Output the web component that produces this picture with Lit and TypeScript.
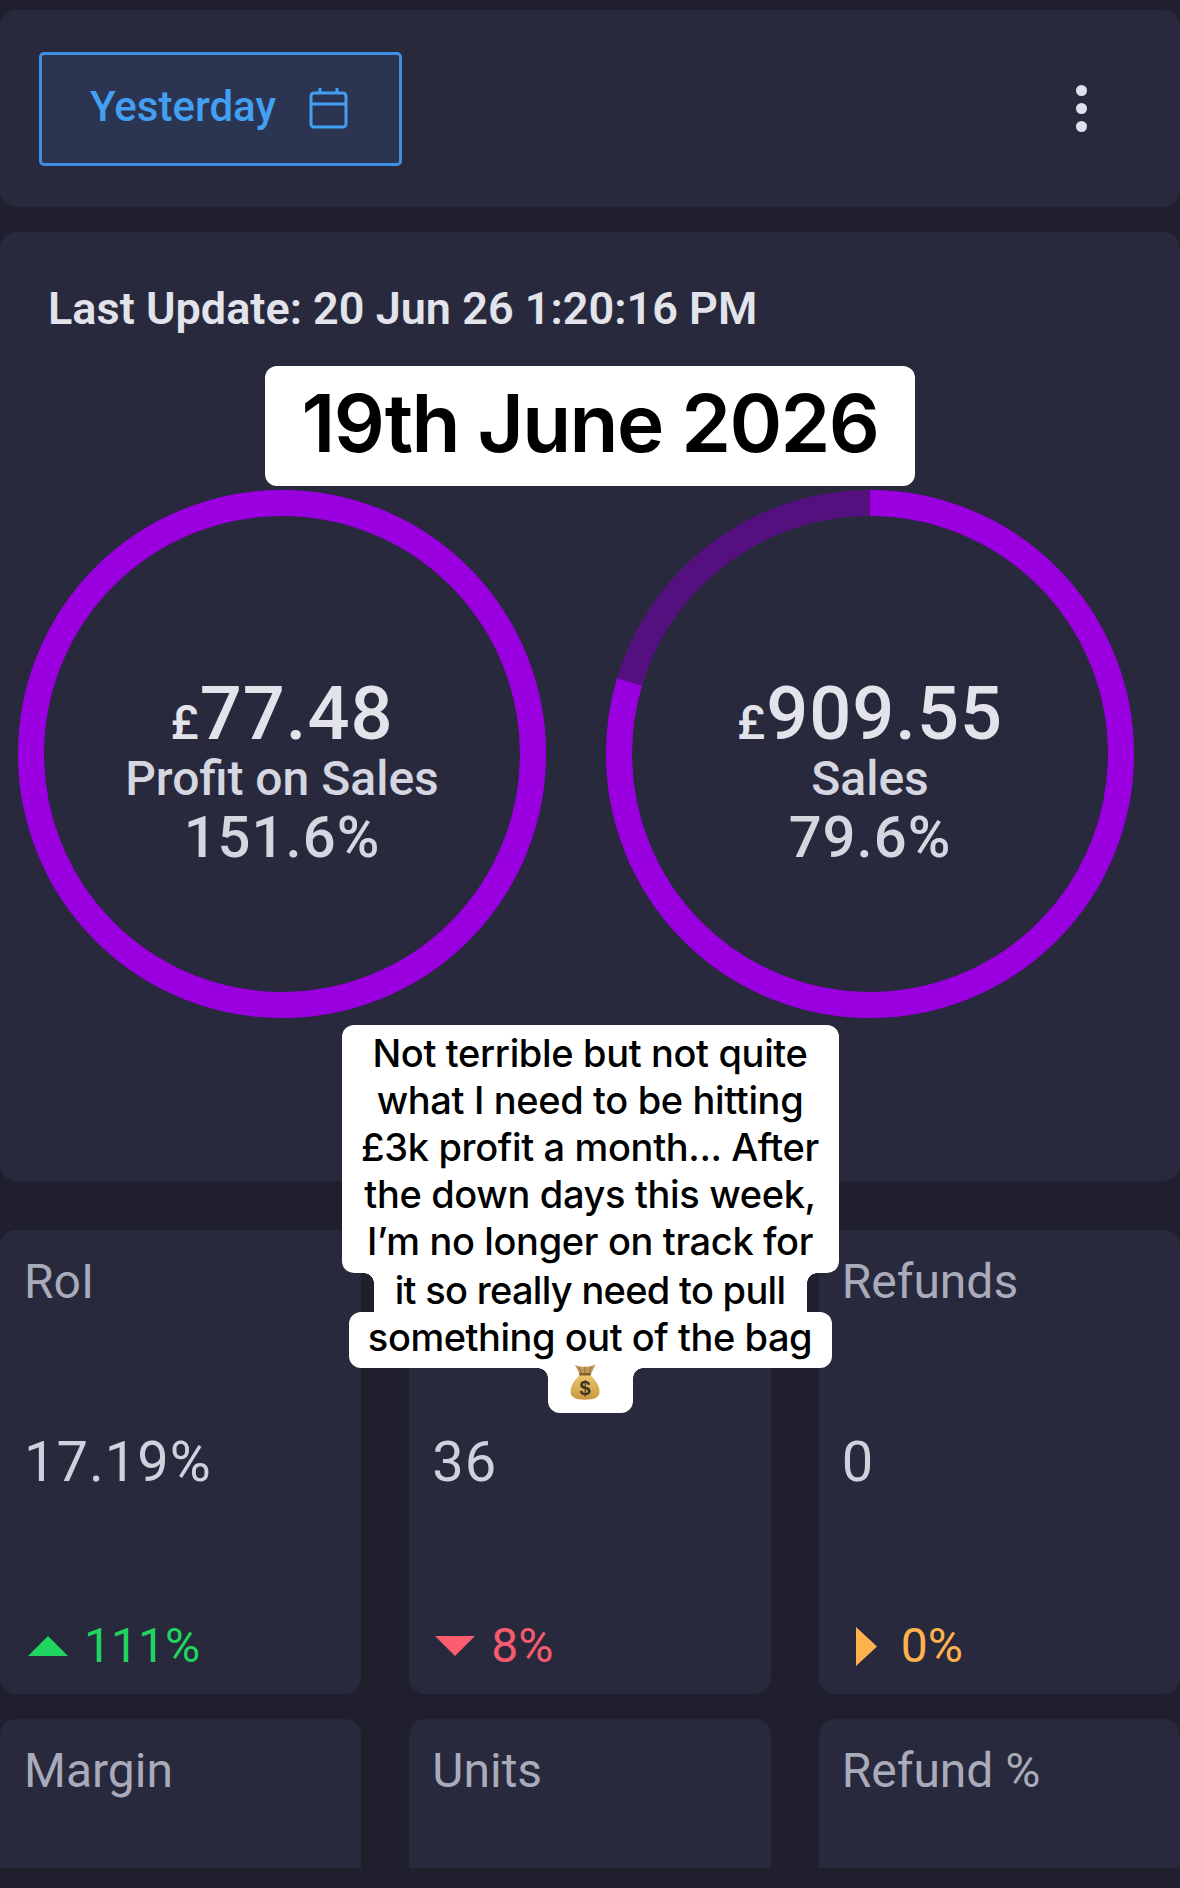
import { LitElement, html, css, svg } from "lit";
import { customElement } from "lit/decorators.js";

const R = 251;
const C = 2 * Math.PI * R;

function ring(pct: number) {
  const bright = (C * pct) / 100;
  return html`<svg class="ring" viewBox="0 0 528 528" width="528" height="528">
    <circle cx="264" cy="264" r="${R}" fill="none" stroke="#55107f" stroke-width="26"></circle>
    <circle cx="264" cy="264" r="${R}" fill="none" stroke="#9a00df" stroke-width="26"
      stroke-dasharray="${bright} ${C}" transform="rotate(-90 264 264)"></circle>
  </svg>`;
}

const bag = svg`<svg class="bag" viewBox="0 0 30 36" width="30" height="36">
  <defs>
    <linearGradient id="bagFill" x1="0" y1="0" x2="0" y2="1">
      <stop offset="0" stop-color="#e8c66c"></stop>
      <stop offset="1" stop-color="#c9993f"></stop>
    </linearGradient>
  </defs>
  <path d="M5 1 C9 2.500 12 3 15 2.500 C18 3 22 2 25.500 0.500 L21 10 H9.500 Z" fill="#c49a5c"></path>
  <path d="M9 3 L12 10 M15 3 V10 M21 3 L18.500 10" stroke="#8f6a36" stroke-width="1" fill="none"></path>
  <path d="M10 11 C4 16 0.500 22 0.500 28 C0.500 33.500 6 35.700 15 35.700 C24 35.700 29.500 33.500 29.500 28 C29.500 22 26 16 20 11 Z" fill="url(#bagFill)"></path>
  <rect x="9" y="9" width="12" height="2.500" rx="1.200" fill="#86602a"></rect>
  <text x="15" y="30.500" font-family="Liberation Sans, sans-serif" font-size="20" font-weight="700" fill="#3e3126" text-anchor="middle">$</text>
</svg>`;

@customElement("app-root")
export class AppRoot extends LitElement {
  static styles = css`
    :host {
      display: block;
      position: relative;
      width: 1180px;
      height: 1888px;
      overflow: hidden;
      background: #1f1f2d;
      font-family: Roboto, "Noto Sans", sans-serif;
      color: #e2e3eb;
    }
    .page { display: flex; flex-direction: column; padding-top: 10px; }
    .card { background: #28293d; border-radius: 16px; }
    .top {
      height: 197px;
      display: flex;
      align-items: center;
      justify-content: space-between;
      padding: 0 93px 0 39px;
      box-sizing: border-box;
    }
    .btn {
      box-sizing: border-box;
      width: 363px;
      height: 114px;
      border: 3px solid #3f8fe4;
      border-radius: 5px;
      background: #2b3552;
      color: #429ff2;
      display: flex;
      align-items: center;
      gap: 33px;
      padding: 0 0 4px 48px;
      font-size: 42px;
      font-weight: 500;
    }
    .cal { margin-top: 3px; }
    .dots { display: flex; flex-direction: column; gap: 7px; }
    .dots i { width: 11px; height: 11px; border-radius: 50%; background: #dfe1ea; }
    .main {
      margin-top: 25px;
      height: 949px;
      box-sizing: border-box;
      padding: 52px 0 0 48px;
    }
    .update { font-size: 45px; font-weight: 600; line-height: 48px; margin-top: 1px; margin-bottom: -1px; }
    .rings {
      display: flex;
      gap: 60px;
      margin: 158px 0 0 -30px;
    }
    .gauge { display: grid; width: 528px; height: 528px; }
    .gauge > * { grid-area: 1 / 1; }
    .gauge-text {
      display: flex;
      flex-direction: column;
      align-items: center;
      justify-content: center;
      padding-top: 46px;
    }
    .amount { font-size: 74px; font-weight: 500; line-height: 68px; letter-spacing: 1px; }
    .amount small { font-size: 48px; font-weight: 500; }
    .gauge-label { font-size: 48px; line-height: 43px; font-weight: 500; color: #d5d6e0; }
    .pct { font-size: 58px; font-weight: 500; line-height: 74px; letter-spacing: 1px; color: #d5d6e0; }
    .grid {
      margin-top: 49px;
      display: grid;
      grid-template-columns: repeat(3, 1fr);
      column-gap: 48px;
      row-gap: 25px;
    }
    .stat {
      height: 464px;
      box-sizing: border-box;
      padding: 24px 24px 0 24px;
      display: flex;
      flex-direction: column;
    }
    .stat:not(:nth-child(3n + 1)) { padding-left: 23px; }
    .stat.cut { height: 149px; border-radius: 16px 16px 0 0; }
    .label { font-size: 48px; line-height: 56px; color: #a9abba; min-height: 56px; }
    .value { margin-top: 119px; font-size: 56px; line-height: 66px; color: #cfd1dc; letter-spacing: 1px; }
    .delta {
      margin-top: 123px;
      display: flex;
      align-items: center;
      font-size: 48px;
      line-height: 56px;
    }
    .up { color: #1fd45f; gap: 16px; }
    .down { color: #f45b6d; gap: 16px; }
    .flat { color: #ffb14e; gap: 24px; }
    .tri { display: block; }
    .up .tri { margin-left: 4px; }
    .down .tri { margin-left: 3px; }
    .flat .tri { margin-left: 14px; }

    .cap {
      position: absolute;
      left: 0;
      right: 0;
      display: flex;
      flex-direction: column;
      align-items: center;
      font-family: Inter, "Noto Sans", sans-serif;
      color: #000;
      text-align: center;
    }
    .date-cap { top: 366px; }
    .date-cap div {
      background: #fff;
      border-radius: 12px;
      width: 650px;
      height: 120px;
      line-height: 114px;
      font-size: 80px;
      font-weight: 600;
      letter-spacing: -1.6px;
    }
    .note { top: 1025px; font-size: 38px; font-weight: 500; line-height: 47px; letter-spacing: -0.35px; }
    .block {
      background: #fff;
      border-radius: 12px;
      width: 497px;
      height: 248px;
      padding-top: 5px;
      box-sizing: border-box;
      white-space: nowrap;
    }
    .line { background: #fff; white-space: nowrap; position: relative; box-sizing: border-box; }
    .l6 { width: 433px; height: 39px; line-height: 35px; letter-spacing: -0.7px; }
    .l7 { width: 483px; height: 56px; border-radius: 12px; line-height: 50px; letter-spacing: -0.45px; }
    .l8 { width: 85px; height: 45px; border-radius: 0 0 12px 12px; display: flex; justify-content: center; padding-right: 10px; }
    .bag { display: block; margin-top: -4px; }
    .l6::before, .l8::before {
      content: "";
      position: absolute;
      top: 0;
      width: 10px;
      height: 10px;
      left: -10px;
      background: radial-gradient(circle at 0 100%, transparent 9.5px, #fff 10px);
    }
    .l6::after, .l8::after {
      content: "";
      position: absolute;
      top: 0;
      width: 10px;
      height: 10px;
      right: -10px;
      background: radial-gradient(circle at 100% 100%, transparent 9.5px, #fff 10px);
    }
  `;

  private stat(label: string, value: string, delta: string, kind: "up" | "down" | "flat") {
    const icon =
      kind === "up"
        ? html`<svg class="tri" width="40" height="20" viewBox="0 0 40 20"><path d="M20 0 L40 20 H0 Z" fill="#1fd45f"></path></svg>`
        : kind === "down"
          ? html`<svg class="tri" width="40" height="20" viewBox="0 0 40 20"><path d="M0 0 H40 L20 20 Z" fill="#fb5d6f"></path></svg>`
          : html`<svg class="tri" width="21" height="39" viewBox="0 0 21 39"><path d="M0 0 L21 19.5 L0 39 Z" fill="#ffb14e"></path></svg>`;
    return html`<div class="card stat">
      <div class="label">${label}</div>
      <div class="value">${value}</div>
      <div class="delta ${kind}">${icon}<span>${delta}</span></div>
    </div>`;
  }

  render() {
    return html`
      <div class="page">
        <div class="card top">
          <div class="btn">
            <span>Yesterday</span>
            <svg class="cal" width="39" height="42" viewBox="0 0 39 42" fill="none" stroke="#429ff2" stroke-width="3">
              <rect x="2" y="6" width="35" height="34" rx="3"></rect>
              <path d="M2 17 H37 M11 1 V6 M28 1 V6"></path>
            </svg>
          </div>
          <div class="dots"><i></i><i></i><i></i></div>
        </div>
        <div class="card main">
          <div class="update">Last Update: 20 Jun 26 1:20:16 PM</div>
          <div class="rings">
            <div class="gauge">
              ${ring(100)}
              <div class="gauge-text">
                <div class="amount"><small>£</small>77.48</div>
                <div class="gauge-label">Profit on Sales</div>
                <div class="pct">151.6%</div>
              </div>
            </div>
            <div class="gauge">
              ${ring(79.6)}
              <div class="gauge-text">
                <div class="amount"><small>£</small>909.55</div>
                <div class="gauge-label">Sales</div>
                <div class="pct">79.6%</div>
              </div>
            </div>
          </div>
        </div>
        <div class="grid">
          ${this.stat("RoI", "17.19%", "111%", "up")}
          ${this.stat("", "36", "8%", "down")}
          ${this.stat("Refunds", "0", "0%", "flat")}
          <div class="card stat cut"><div class="label">Margin</div></div>
          <div class="card stat cut"><div class="label">Units</div></div>
          <div class="card stat cut"><div class="label">Refund %</div></div>
        </div>
      </div>
      <div class="cap date-cap"><div>19th June 2026</div></div>
      <div class="cap note">
        <div class="block">
          Not terrible but not quite<br />what I need to be hitting<br />£3k profit a month... After<br />the down days this week,<br />I’m no longer on track for
        </div>
        <div class="line l6">it so really need to pull</div>
        <div class="line l7">something out of the bag</div>
        <div class="line l8">${bag}</div>
      </div>
    `;
  }
}
